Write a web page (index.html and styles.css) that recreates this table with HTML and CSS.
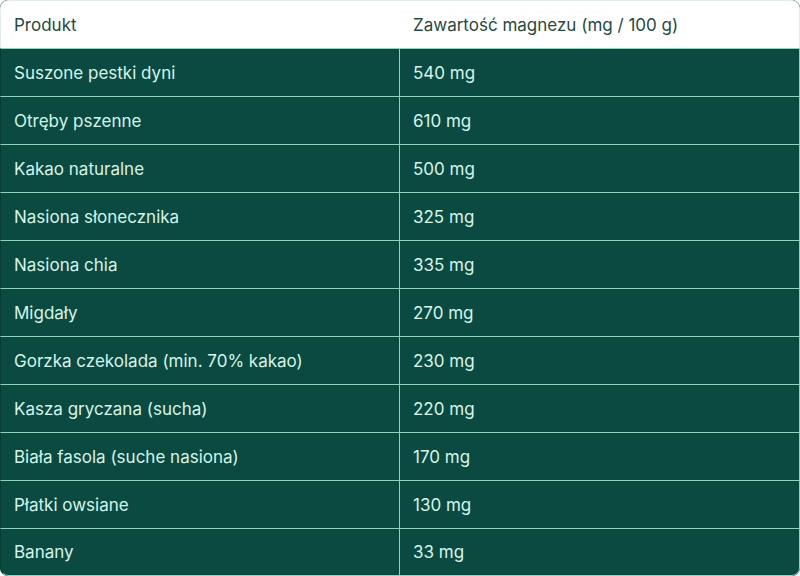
FILE: index.html
```html
<!DOCTYPE html>
<html lang="pl">
<head>
<meta charset="utf-8">
<link rel="stylesheet" href="styles.css">
</head>
<body>
<div class="table">
  <div class="row head"><div class="cell c1">Produkt</div><div class="cell c2">Zawartość magnezu (mg / 100 g)</div></div>
  <div class="row"><div class="cell c1">Suszone pestki dyni</div><div class="cell c2">540 mg</div></div>
  <div class="row"><div class="cell c1">Otręby pszenne</div><div class="cell c2">610 mg</div></div>
  <div class="row"><div class="cell c1">Kakao naturalne</div><div class="cell c2">500 mg</div></div>
  <div class="row"><div class="cell c1">Nasiona słonecznika</div><div class="cell c2">325 mg</div></div>
  <div class="row"><div class="cell c1">Nasiona chia</div><div class="cell c2">335 mg</div></div>
  <div class="row"><div class="cell c1">Migdały</div><div class="cell c2">270 mg</div></div>
  <div class="row"><div class="cell c1">Gorzka czekolada (min. 70% kakao)</div><div class="cell c2">230 mg</div></div>
  <div class="row"><div class="cell c1">Kasza gryczana (sucha)</div><div class="cell c2">220 mg</div></div>
  <div class="row"><div class="cell c1">Biała fasola (suche nasiona)</div><div class="cell c2">170 mg</div></div>
  <div class="row"><div class="cell c1">Płatki owsiane</div><div class="cell c2">130 mg</div></div>
  <div class="row last"><div class="cell c1">Banany</div><div class="cell c2">33 mg</div></div>
</div>
</body>
</html>
```
FILE: styles.css
```css
html, body {
  margin: 0;
  padding: 0;
  background: #ffffff;
}
body {
  font-family: Inter, "Noto Sans", sans-serif;
  font-size: 17px;
}
.table {
  width: 800px;
  height: 576px;
  background: #0b4a41;
  border-radius: 8px;
  overflow: hidden;
  display: flex;
  flex-direction: column;
}
.row {
  display: grid;
  grid-template-columns: 399px 1fr;
  height: 48px;
  flex: none;
  box-sizing: border-box;
  border-top: 1px solid #8fd2c0;
  border-left: 1px solid #083d35;
  border-right: 1px solid #8fd2c0;
  color: #d6f4e8;
}
.row.head {
  background: #ffffff;
  border: 1px solid #e3ebe8;
  border-bottom: none;
  border-radius: 8px 8px 0 0;
  color: #1f4a41;
}
.row.last {
  border-bottom: 1px solid #8fd2c0;
  border-radius: 0 0 8px 8px;
}
.cell {
  display: flex;
  align-items: center;
  padding-left: 13px;
}
.c1 {
  border-right: 1px solid #8fd2c0;
}
.head .c1 {
  border-right: 1px solid transparent;
}
.c2 {
  padding-left: 13px;
}
```
